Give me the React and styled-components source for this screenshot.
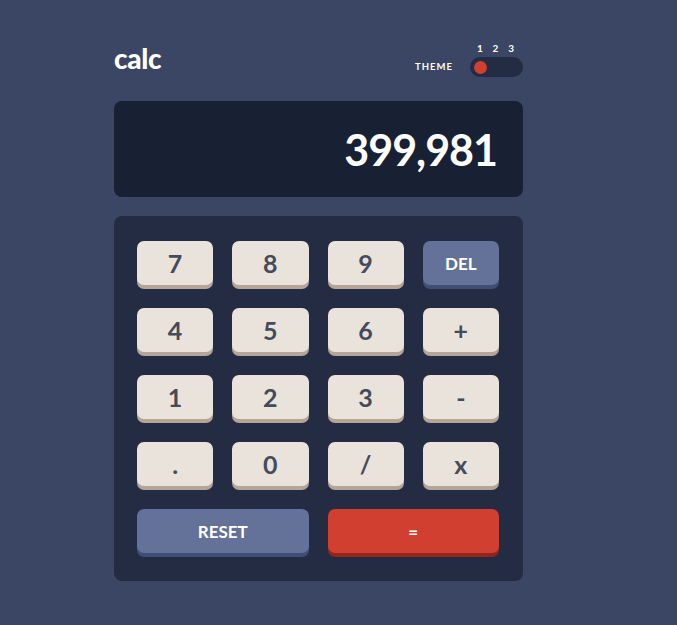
import React from "react";
import styled, { createGlobalStyle } from "styled-components";

const GlobalStyle = createGlobalStyle`
  html, body {
    margin: 0;
    padding: 0;
    background: #3a4663;
    font-family: Lato, "Open Sans", "Liberation Sans", sans-serif;
  }
`;

const Page = styled.div`
  width: 677px;
  height: 625px;
  background: #3a4663;
  padding-top: 40px;
  box-sizing: border-box;
`;

const Calculator = styled.div`
  width: 409px;
  margin-left: 114px;
`;

const Header = styled.header`
  display: flex;
  justify-content: space-between;
  align-items: flex-end;
  height: 37px;
  color: #ffffff;
`;

const Logo = styled.h1`
  margin: 0;
  font-size: 28px;
  font-weight: 900;
  line-height: 1;
  letter-spacing: -0.3px;
  padding-bottom: 5px;
`;

const ThemeBox = styled.div`
  display: flex;
  align-items: flex-end;
  gap: 17px;
`;

const ThemeLabel = styled.span`
  font-size: 9.5px;
  font-weight: 700;
  letter-spacing: 1px;
  line-height: 20px;
`;

const ToggleGroup = styled.div`
  display: flex;
  flex-direction: column;
  gap: 2px;
`;

const ToggleNumbers = styled.div`
  display: flex;
  justify-content: space-around;
  padding: 0 4px 0 2px;
  font-size: 10px;
  font-weight: 700;
  line-height: 14px;
`;

const Track = styled.div`
  width: 53px;
  height: 20px;
  border-radius: 10px;
  background: #232c43;
  display: flex;
  align-items: center;
  padding: 0 4px;
  box-sizing: border-box;
`;

const Knob = styled.span`
  width: 13px;
  height: 13px;
  border-radius: 50%;
  background: #d03f2f;
`;

const Screen = styled.div`
  margin-top: 24px;
  height: 96px;
  border-radius: 8px;
  background: #182034;
  display: flex;
  align-items: center;
  justify-content: flex-end;
  padding: 0 26px;
  box-sizing: border-box;
  color: #ffffff;
  font-size: 43px;
  font-weight: 700;
  letter-spacing: -1px;
`;

const Keypad = styled.div`
  margin-top: 19px;
  background: #232c43;
  border-radius: 8px;
  padding: 25px 24px 28px 23px;
  display: grid;
  grid-template-columns: repeat(4, 1fr);
  grid-auto-rows: 44px;
  gap: 23px 19px;
`;

const palette = {
  light: { bg: "#eae3dc", shadow: "#b4a597", color: "#444b5a" },
  blue: { bg: "#647198", shadow: "#414e73", color: "#ffffff" },
  red: { bg: "#d03f2f", shadow: "#93261a", color: "#ffffff" },
};

const Key = styled.button`
  border: none;
  border-radius: 7px;
  background: ${(p) => palette[p.$tone].bg};
  box-shadow: 0 4px 0 ${(p) => palette[p.$tone].shadow};
  color: ${(p) => palette[p.$tone].color};
  font-family: inherit;
  font-weight: 700;
  font-size: ${(p) => (p.$small ? "17px" : "25px")};
  grid-column: span ${(p) => p.$span || 1};
  padding: 0;
  display: flex;
  align-items: center;
  justify-content: center;
  cursor: pointer;
`;

const keys = [
  ["7"], ["8"], ["9"], ["DEL", "blue", true],
  ["4"], ["5"], ["6"], ["+"],
  ["1"], ["2"], ["3"], ["-"],
  ["."], ["0"], ["/"], ["x"],
];

export default function App() {
  return (
    <>
      <GlobalStyle />
      <Page>
        <Calculator>
          <Header>
            <Logo>calc</Logo>
            <ThemeBox>
              <ThemeLabel>THEME</ThemeLabel>
              <ToggleGroup>
                <ToggleNumbers>
                  <span>1</span>
                  <span>2</span>
                  <span>3</span>
                </ToggleNumbers>
                <Track>
                  <Knob />
                </Track>
              </ToggleGroup>
            </ThemeBox>
          </Header>
          <Screen>399,981</Screen>
          <Keypad>
            {keys.map(([label, tone = "light", small]) => (
              <Key key={label} $tone={tone} $small={small}>
                {label}
              </Key>
            ))}
            <Key $tone="blue" $small $span={2}>
              RESET
            </Key>
            <Key $tone="red" $small $span={2}>
              =
            </Key>
          </Keypad>
        </Calculator>
      </Page>
    </>
  );
}
